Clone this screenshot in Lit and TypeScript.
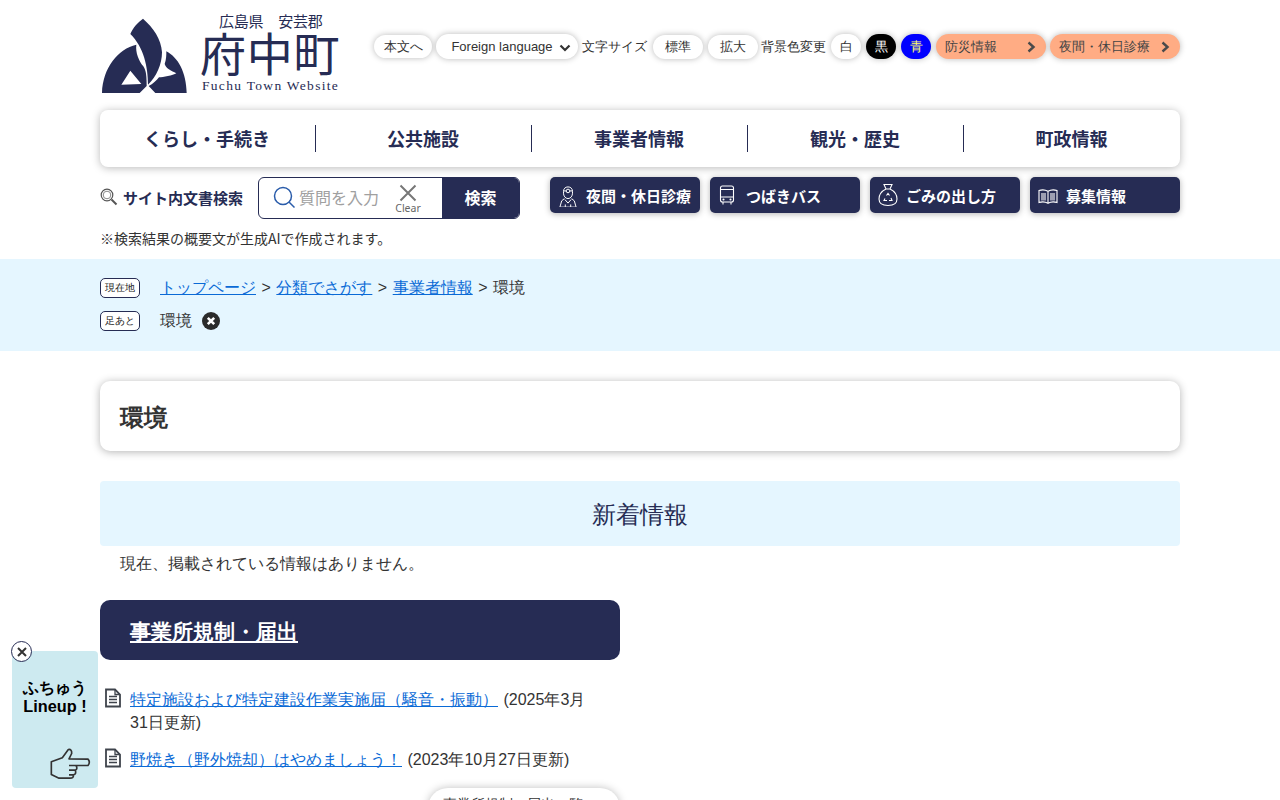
import { LitElement, html, css, svg } from "lit";
import { customElement } from "lit/decorators.js";

const chev = html`<svg class="chev" viewBox="0 0 10 12" width="10" height="12"><path d="M2.500 1.500 7.500 6l-5 4.500" fill="none" stroke="#4a4a4a" stroke-width="2.400"/></svg>`;

const doc = html`<svg class="doc" viewBox="0 0 18 20" width="18" height="20"><path d="M2 1.500h9l5 5v12H2z" fill="#fff" stroke="#3f444c" stroke-width="1.800"/><path d="M11 1.500v5h5M5 8.500h8M5 11.500h8M5 14.500h8" fill="none" stroke="#3f444c" stroke-width="1.300"/></svg>`;

const icons = [
  svg`<g transform="translate(1 3) scale(.9)"><path d="M10 1c-3 0-5 2-5 5v2c0 3 2 6 5 6s5-3 5-6V6c0-3-2-5-5-5z"/><circle cx="10" cy="5.500" r="2"/><path d="M5 5.500h3M12 5.500h3M6 14 3 16.500 1 23.500h18l-2-7-3-2.500M6.500 15l3.500 4 3.500-4M7 23.500v-3M13 23.500v-3"/></g>`,
  svg`<rect x="2.500" y="3" width="13" height="16" rx="2"/><path d="M2.500 6.500h13M2.500 14h13M5 19v2.500M13 19v2.500"/><circle cx="5.500" cy="16.500" r=".5"/><circle cx="12.500" cy="16.500" r=".5"/>`,
  svg`<path d="M6 1.500h8L12 6H8zM8 6C4 8 1 11.500 1 16c0 4.500 3.500 6.500 9 6.500s9-2 9-6.500C19 11.500 16 8 12 6"/><path d="M8.500 12.500l1.500-2 1.500 2M7 15.500l-1 2h3M13 15l1 2.500h-3"/>`,
  svg`<path d="M1 7.500c3-1 6-1 9 .8 3-1.800 6-1.800 9-.8v12c-3-1-6-1-9 .8-3-1.800-6-1.800-9-.8zM10 8.300v12"/><path d="M12 10h5v7.500h-5zM3 10h5v7.500H3z" fill="#fff" fill-opacity=".55" stroke="none"/>`,
];

@customElement("app-root")
export class AppRoot extends LitElement {
  static styles = css`
    :host {
      display: block;
      font-family: "Liberation Sans", sans-serif;
      color: #333;
      font-size: 16px;
      background: #fff;
    }
    a { color: #0a6ad6; }
    .wrap { width: 1080px; margin: 0 auto; }
    .top { display: flex; align-items: flex-start; height: 110px; }
    .logo { width: 274px; flex: none; display: flex; margin-top: 14px; }
    .mark { margin-left: -2px; flex: none; }
    .logotext { display: flex; flex-direction: column; margin-left: 8px; width: 150px; color: #262c54; }
    .pref { font: 15px/16px "Noto Sans CJK JP", sans-serif; padding-left: 19px; white-space: pre; letter-spacing: -.2px; margin-top: -1px; }
    .town { font: 400 46px/46px "Noto Sans CJK JP", sans-serif; letter-spacing: .7px; white-space: nowrap; margin-top: -1px; }
    .en { font: 13.500px/16px "Liberation Serif", serif; letter-spacing: 1.300px; white-space: nowrap; margin-top: 4px; margin-left: 2px; }
    .tools { display: flex; align-items: center; font-size: 13px; white-space: nowrap; margin-top: 34px; }
    .pill { display: flex; align-items: center; justify-content: center; height: 25px; border-radius: 13px; background: #fff; box-shadow: 0 0 6px rgba(0, 0, 0, .28); box-sizing: border-box; flex: none; }
    .lbl { flex: none; margin-left: 4px; }
    .lbl + .size { margin-left: 6px; }
    .p-main { width: 58px; height: 23px; }
    .p-lang { width: 142px; margin-left: 4px; gap: 6px; padding-left: 8px; }
    .p-lang svg { margin-top: 3px; }
    .size { width: 50px; height: 24px; margin-left: 5px; }
    .size + .lbl { margin-left: 3px; }
    .col { width: 30px; margin-left: 5px; }
    .black { background: #000; color: #fff; }
    .blue { background: #00f; color: #ff6; }
    .orange { background: #ffac84; justify-content: space-between; padding: 0 10px 0 9px; color: #444; }
    .w1 { width: 110px; margin-left: 5px; }
    .w2 { width: 130px; margin-left: 4px; }
    .nav { display: grid; grid-template-columns: repeat(5, 1fr); height: 57px; align-items: center; background: #fff; border-radius: 8px; box-shadow: 0 1px 8px rgba(0, 0, 0, .28); }
    .nav div { text-align: center; font: 700 18px/27px "Noto Sans CJK JP", sans-serif; color: #262c54; border-right: 1px solid #262c54; padding-right: 1px; }
    .nav div:last-child { border-right: 0; }
    .search { display: flex; margin-top: 10px; align-items: flex-start; }
    .slabel { width: 158px; flex: none; height: 40px; display: flex; align-items: center; gap: 5px; font: 700 15px "Noto Sans CJK JP", sans-serif; color: #262c54; white-space: nowrap; }
    .box { width: 262px; height: 42px; flex: none; display: flex; box-sizing: border-box; border: 1px solid #262c54; border-radius: 6px; overflow: hidden; }
    .input { flex: 1; display: flex; align-items: center; padding: 0 0 2px 14px; position: relative; font: 16px "Noto Sans CJK JP", sans-serif; color: #a0a0a0; gap: 4px; }
    .clear { position: absolute; left: 136px; top: 6px; width: 26px; display: flex; flex-direction: column; align-items: center; font: 10.500px/12px "Noto Sans", sans-serif; color: #666; }
    .sbtn { width: 77px; background: #262c54; color: #fff; font: 700 16px/38px "Noto Sans CJK JP", sans-serif; text-align: center; }
    .quick { display: flex; gap: 10px; margin-left: 30px; }
    .q { width: 150px; height: 36px; flex: none; background: #262c54; color: #fff; border-radius: 5px; display: flex; align-items: center; gap: 8px; padding-left: 8px; box-sizing: border-box; font: 700 15px "Noto Sans CJK JP", sans-serif; box-shadow: 0 1px 6px rgba(0, 0, 0, .3); white-space: nowrap; }
    .q svg { fill: none; stroke: #fff; stroke-width: 1.100; flex: none; }
    .note { font: 14px/20px "Noto Sans CJK JP", sans-serif; margin-top: 9px; height: 31px; color: #333; }
    .band { background: #e5f6ff; height: 92px; padding-top: 17px; box-sizing: border-box; }
    .crumb { display: flex; align-items: center; height: 24px; margin-bottom: 9px; }
    .tag { width: 40px; height: 20px; box-sizing: border-box; border: 1px solid #262c54; border-radius: 5px; background: #fff; font-size: 10px; line-height: 18px; text-align: center; color: #222; margin-right: 20px; flex: none; }
    .sep { margin: 0 5.500px; }
    .x { margin-left: 10px; display: block; }
    .title { margin-top: 30px; height: 70px; box-sizing: border-box; padding: 4px 0 0 20px; border-radius: 10px; background: #fff; box-shadow: 0 1px 8px rgba(0, 0, 0, .3); display: flex; align-items: center; font-size: 24px; font-weight: 700; color: #333; }
    .news { margin-top: 30px; height: 65px; background: #e5f6ff; border-radius: 4px; text-align: center; font-size: 24px; line-height: 67px; color: #262c54; }
    .none { margin: 6px 0 0 20px; line-height: 24px; }
    .cat { width: 520px; margin-top: 24px; height: 60px; box-sizing: border-box; background: #262c54; border-radius: 10px; padding-left: 30px; color: #fff; font-size: 21px; font-weight: 700; line-height: 64px; text-decoration: underline; }
    ul { list-style: none; margin: 28px 0 0; padding: 0; width: 490px; }
    li { display: flex; margin-bottom: 14px; line-height: 23px; }
    .doc { flex: none; margin: 0 8px 0 4px; }
    .date { margin-left: 1px; }
    .more { width: 192px; height: 40px; margin: 17px 0 0 328px; border-radius: 20px; background: #fff; box-shadow: 0 0 8px rgba(0, 0, 0, .25); font-size: 14px; padding: 8px 15px; box-sizing: border-box; white-space: nowrap; display: flex; justify-content: space-between; }
    .float { position: fixed; left: 12px; top: 651px; width: 86px; height: 137px; background: #cdeaf0; border-radius: 4px; text-align: center; font-weight: 700; font-size: 16.300px; line-height: 19px; color: #000; padding-top: 27px; box-sizing: border-box; }
    .close { position: absolute; left: -1px; top: -10px; width: 21px; height: 21px; box-sizing: border-box; border-radius: 50%; border: 1px solid #262c54; background: #fff; display: flex; align-items: center; justify-content: center; }
    .hand { position: absolute; left: 38px; top: 96px; }
  `;

  render() {
    const quick = ["夜間・休日診療", "つばきバス", "ごみの出し方", "募集情報"];
    return html`
      <div class="wrap">
        <header class="top">
          <div class="logo">
            <svg class="mark" viewBox="0 0 282 252" width="94" height="84"><g fill="#262c54"><path d="M135 14C165 40 190 75 192 115 192 150 175 190 150 212 150 160 138 100 97 60 105 40 120 25 135 14Z"/><path fill-rule="evenodd" d="M115 92C60 105 15 160 12 237L125 237 146 216C146 190 145 170 136 157 122 140 112 115 115 92ZM97 170 70 212 130 210Z"/><path d="M205 112C240 130 265 175 266 237L172 237 152 216C165 210 175 200 183 190 195 190 225 185 235 178 220 170 205 165 200 150 205 135 205 125 205 112Z"/></g></svg>
            <div class="logotext">
              <div class="pref">広島県　安芸郡</div>
              <div class="town">府中町</div>
              <div class="en">Fuchu Town Website</div>
            </div>
          </div>
          <div class="tools">
            <div class="pill p-main">本文へ</div>
            <div class="pill p-lang">Foreign language <svg viewBox="0 0 12 8" width="12" height="8"><path d="M1.500 1.500 6 6l4.500-4.500" fill="none" stroke="#333" stroke-width="2.200"/></svg></div>
            <span class="lbl">文字サイズ</span>
            <div class="pill size">標準</div>
            <div class="pill size">拡大</div>
            <span class="lbl">背景色変更</span>
            <div class="pill col">白</div>
            <div class="pill col black">黒</div>
            <div class="pill col blue">青</div>
            <div class="pill orange w1">防災情報 ${chev}</div>
            <div class="pill orange w2">夜間・休日診療 ${chev}</div>
          </div>
        </header>
        <nav class="nav">
          <div>くらし・手続き</div><div>公共施設</div><div>事業者情報</div><div>観光・歴史</div><div>町政情報</div>
        </nav>
        <div class="search">
          <div class="slabel">
            <svg viewBox="0 0 18 18" width="18" height="18"><circle cx="7" cy="7" r="5.800" fill="none" stroke="#555" stroke-width="1.200"/><circle cx="7" cy="7" r="3.800" fill="none" stroke="#888"/><path d="m11.500 11.500 5 5" stroke="#555" stroke-width="2"/></svg>
            サイト内文書検索
          </div>
          <div class="box">
            <div class="input">
              <svg viewBox="0 0 22 22" width="22" height="22"><circle cx="10" cy="10" r="8.500" fill="none" stroke="#2a5caa" stroke-width="1.500"/><path d="m16 16 5.500 5.500" stroke="#2a5caa" stroke-width="1.500"/></svg>
              質問を入力
              <div class="clear"><svg viewBox="0 0 18 18" width="18" height="18"><path d="m1.500 1.500 15 15m0-15-15 15" stroke="#777" stroke-width="2"/></svg>Clear</div>
            </div>
            <div class="sbtn">検索</div>
          </div>
          <div class="quick">
            ${quick.map((q, i) => html`<div class="q"><svg viewBox="0 0 20 24" width="20" height="24">${icons[i]}</svg>${q}</div>`)}
          </div>
        </div>
        <div class="note">※検索結果の概要文が生成AIで作成されます。</div>
      </div>
      <section class="band">
        <div class="wrap">
          <div class="crumb"><span class="tag">現在地</span><a href="#">トップページ</a><span class="sep">&gt;</span><a href="#">分類でさがす</a><span class="sep">&gt;</span><a href="#">事業者情報</a><span class="sep">&gt;</span>環境</div>
          <div class="crumb"><span class="tag">足あと</span>環境<svg class="x" viewBox="0 0 18 18" width="18" height="18"><circle cx="9" cy="9" r="9" fill="#2b2b2b"/><path d="m5.800 5.800 6.400 6.400m0-6.400-6.400 6.400" stroke="#fff" stroke-width="2.600"/></svg></div>
        </div>
      </section>
      <main class="wrap">
        <div class="title">環境</div>
        <div class="news">新着情報</div>
        <div class="none">現在、掲載されている情報はありません。</div>
        <div class="cat">事業所規制・届出</div>
        <ul>
          <li>${doc}<span><a href="#">特定施設および特定建設作業実施届（騒音・振動）</a> <span class="date">(2025年3月31日更新)</span></span></li>
          <li>${doc}<span><a href="#">野焼き（野外焼却）はやめましょう！</a> <span class="date">(2023年10月27日更新)</span></span></li>
        </ul>
        <div class="more"><span>事業所規制・届出一覧へ</span><span>›</span></div>
      </main>
      <aside class="float">
        <div class="close"><svg viewBox="0 0 12 12" width="12" height="12"><path d="m2 2 8 8m0-8-8 8" stroke="#333" stroke-width="2"/></svg></div>
        ふちゅう<br />Lineup !
        <svg class="hand" viewBox="148 353 126 98" width="42" height="33"><path fill="none" stroke="#333" stroke-width="5" stroke-linejoin="round" d="M152 397 185 385 203 360Q214 358 213 372L205 388 262 389Q270 398 262 408L226 408Q232 418 224 422 228 434 218 436 220 446 208 446L175 446 152 435ZM205 408H226M205 422H224M205 436H218"/></svg>
      </aside>
    `;
  }
}
